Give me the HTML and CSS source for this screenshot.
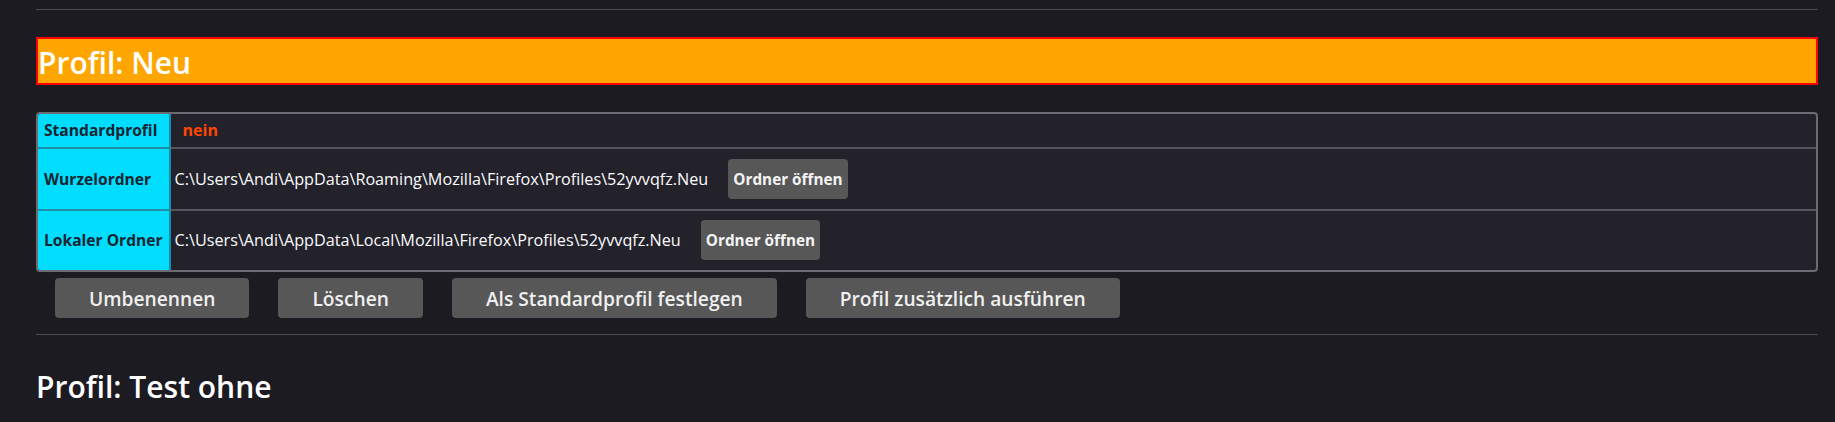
FILE: index.html
```html
<!DOCTYPE html>
<html lang="de">
<head>
<meta charset="utf-8">
<title>Profile</title>
<link rel="stylesheet" href="styles.css">
</head>
<body>
<hr class="sep sep-top">
<section class="profile">
  <h2 class="profile-title is-current">Profil: Neu</h2>
  <table class="info">
    <tbody>
      <tr class="row-short">
        <th class="label">Standardprofil</th>
        <td class="value"><span class="flag-no">nein</span></td>
      </tr>
      <tr>
        <th class="label">Wurzelordner</th>
        <td class="value"><span class="path">C:\Users\Andi\AppData\Roaming\Mozilla\Firefox\Profiles\52yvvqfz.Neu</span><button class="btn-folder">Ordner öffnen</button></td>
      </tr>
      <tr>
        <th class="label">Lokaler Ordner</th>
        <td class="value"><span class="path">C:\Users\Andi\AppData\Local\Mozilla\Firefox\Profiles\52yvvqfz.Neu</span><button class="btn-folder">Ordner öffnen</button></td>
      </tr>
    </tbody>
  </table>
  <div class="actions">
    <button class="btn-action">Umbenennen</button>
    <button class="btn-action">Löschen</button>
    <button class="btn-action">Als Standardprofil festlegen</button>
    <button class="btn-action">Profil zusätzlich ausführen</button>
  </div>
</section>
<hr class="sep sep-mid">
<section class="profile">
  <h2 class="profile-title">Profil: Test ohne</h2>
</section>
</body>
</html>
```
FILE: styles.css
```css
html, body {
  margin: 0;
  padding: 0;
  background: #1c1b22;
}

body {
  padding: 0 17px 0 36px;
  font-family: "Open Sans", "Noto Sans", sans-serif;
  color: #fbfbfe;
  overflow: hidden;
}

.sep {
  border: 0;
  border-top: 1px solid #4e4d55;
  margin: 0;
  height: 0;
}

.sep-top {
  margin-top: 9px;
}

.sep-mid {
  margin-top: 16px;
}

.profile-title {
  margin: 30px 0 0;
  font-size: 30px;
  font-weight: 600;
  line-height: 44px;
  color: #ffffff;
}

.profile-title.is-current {
  margin-top: 27px;
  background: #ffa500;
  border: 2px solid #ff0000;
  padding-top: 3px;
  line-height: 41px;
}

.info {
  margin-top: 27px;
  width: 100%;
  border-collapse: separate;
  border-spacing: 0;
  border: 2px solid #6c6b72;
  border-radius: 4px;
  overflow: hidden;
  background: #23222b;
}

.info th,
.info td {
  padding: 9.75px 4px;
  border-top: 2px solid #56555c;
  vertical-align: middle;
  text-align: left;
}

.info tr:first-child th,
.info tr:first-child td {
  border-top: 0;
}

.info .row-short th,
.info .row-short td {
  padding-top: 6px;
  padding-bottom: 6px;
  line-height: 21px;
}

.label {
  width: 1%;
  white-space: nowrap;
  background: #00ddff;
  color: #172530;
  font-size: 15.6px;
  font-weight: 700;
  padding-left: 6px !important;
  padding-right: 6px !important;
  border-right: 2px solid #1a8ea3;
  border-top-color: #1a8ea3 !important;
}

.value {
  font-size: 16.2px;
  color: #fbfbfe;
  width: 99%;
}

.flag-no {
  margin-left: 8px;
  color: #ff4500;
  font-weight: 700;
  font-size: 16px;
}

.path {
  vertical-align: middle;
}

.btn-folder {
  margin-left: 20px;
  height: 40px;
  padding: 0 5px;
  border: 0;
  border-radius: 4px;
  background: #575757;
  color: #f4f4f4;
  font-family: "Open Sans", "Noto Sans", sans-serif;
  font-size: 15.3px;
  font-weight: 700;
  vertical-align: middle;
}

.actions {
  margin-top: 6px;
  padding-left: 19px;
  display: flex;
  gap: 29px;
}

.btn-action {
  height: 40px;
  padding: 0 34px;
  border: 0;
  border-radius: 4px;
  background: #575757;
  color: #f0f0f0;
  font-family: "Open Sans", "Noto Sans", sans-serif;
  font-size: 19.2px;
  font-weight: 600;
}
```
